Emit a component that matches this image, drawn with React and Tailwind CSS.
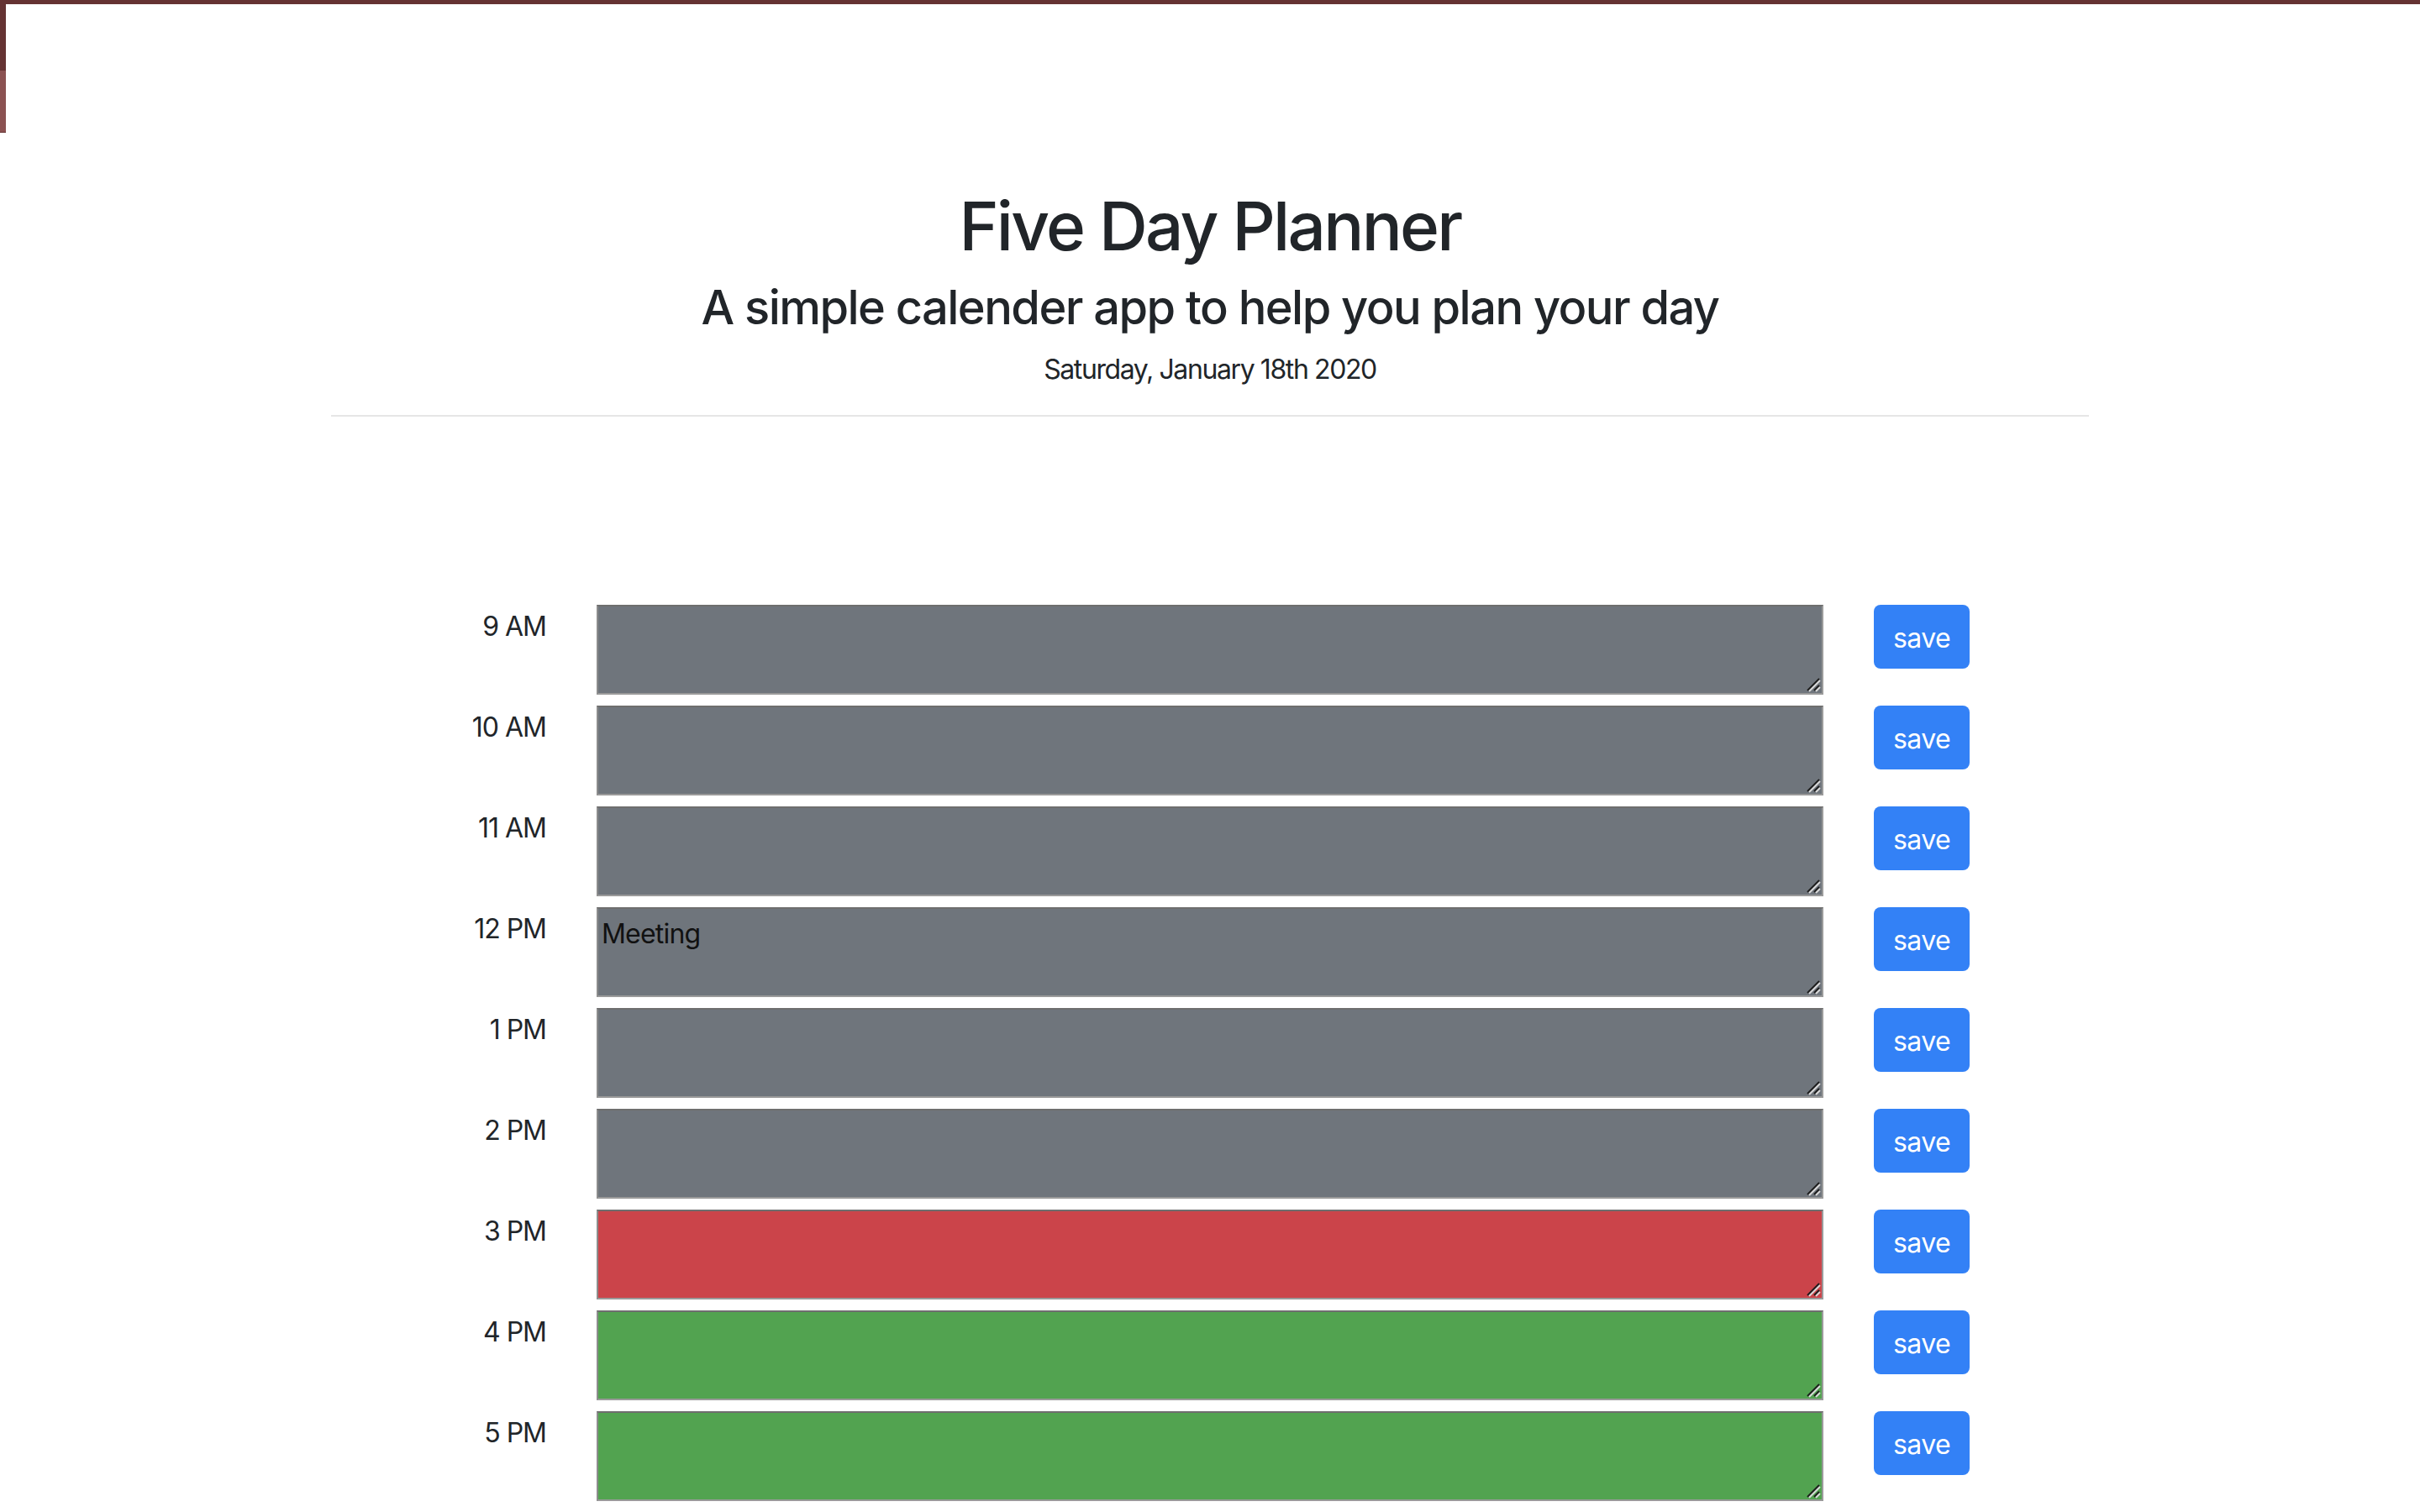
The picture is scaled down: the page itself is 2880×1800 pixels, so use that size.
const hours = [
  { label: "9 AM", state: "past", text: "" },
  { label: "10 AM", state: "past", text: "" },
  { label: "11 AM", state: "past", text: "" },
  { label: "12 PM", state: "past", text: "Meeting" },
  { label: "1 PM", state: "past", text: "" },
  { label: "2 PM", state: "past", text: "" },
  { label: "3 PM", state: "present", text: "" },
  { label: "4 PM", state: "future", text: "" },
  { label: "5 PM", state: "future", text: "" },
];

const stateBg = {
  past: "bg-[#6f757c]",
  present: "bg-[#cb444a]",
  future: "bg-[#52a350]",
};

// textarea resize grip, drawn since the headless browser hides it
function Grip() {
  return (
    <svg
      className="absolute right-[3px] bottom-[3px] pointer-events-none"
      width="18"
      height="18"
      viewBox="0 0 18 18"
    >
      <line x1="2" y1="16" x2="16" y2="2" stroke="#1c1c1c" strokeWidth="2" />
      <line x1="4" y1="17" x2="17" y2="4" stroke="#d8d8d8" strokeWidth="2" />
      <line x1="10" y1="16" x2="16" y2="10" stroke="#1c1c1c" strokeWidth="2" />
      <line x1="12" y1="17" x2="17" y2="12" stroke="#d8d8d8" strokeWidth="2" />
    </svg>
  );
}

function TimeBlock({ hour }) {
  return (
    <div className="flex h-[107px] mb-[13px]">
      <div className="w-[152px] pr-[30px] pt-[2px] text-right text-[32px] leading-[48px] tracking-[-1px]">
        {hour.label}
      </div>
      <div className="w-[1520px] px-[30px]">
        <div className="relative">
          <textarea
            defaultValue={hour.text}
            className={`block w-full h-[107px] resize-none border-2 border-t-[#6e6e6e] border-l-[#8c8c8c] border-r-[#9b9b9b] border-b-[#9a9a9a] px-[4px] pt-[6px] pb-[4px] text-[32px] leading-[48px] tracking-[-0.8px] text-[#111] ${stateBg[hour.state]}`}
          />
          <Grip />
        </div>
      </div>
      <div className="w-[152px] pl-[30px]">
        <button className="w-[114px] h-[76px] pt-[3px] rounded-[8px] bg-[#3381f6] text-white text-[32px] leading-[48px] tracking-[-0.6px]">
          save
        </button>
      </div>
    </div>
  );
}

export default function App() {
  return (
    <div className="relative min-h-[1800px] bg-white text-[#212529] font-['Inter',sans-serif]">
      <div className="h-[5px] bg-[#653333]" />
      <div className="absolute left-0 top-0 w-[7px]">
        <div className="h-[84px] bg-[#653333]" />
        <div className="h-[73px] bg-[#8b5252]" />
        <div className="h-[1px] bg-[#653333]" />
      </div>

      <header className="w-[2092px] mx-auto pt-[216px] text-center">
        <h1 className="text-[80px] leading-[96px] font-medium tracking-[-2.7px]">Five Day Planner</h1>
        <h2 className="mt-[16px] text-[56px] leading-[67px] font-medium tracking-[-1.55px]">
          A simple calender app to help you plan your day
        </h2>
        <p className="mt-[16px] text-[32px] leading-[48px] tracking-[-1.4px]">Saturday, January 18th 2020</p>
        <hr className="mt-[30px] border-0 h-[2px] bg-[#e6e6e6]" />
      </header>

      <div className="w-[1824px] mx-auto mt-[224px]">
        {hours.map((hour) => (
          <TimeBlock key={hour.label} hour={hour} />
        ))}
      </div>
    </div>
  );
}
